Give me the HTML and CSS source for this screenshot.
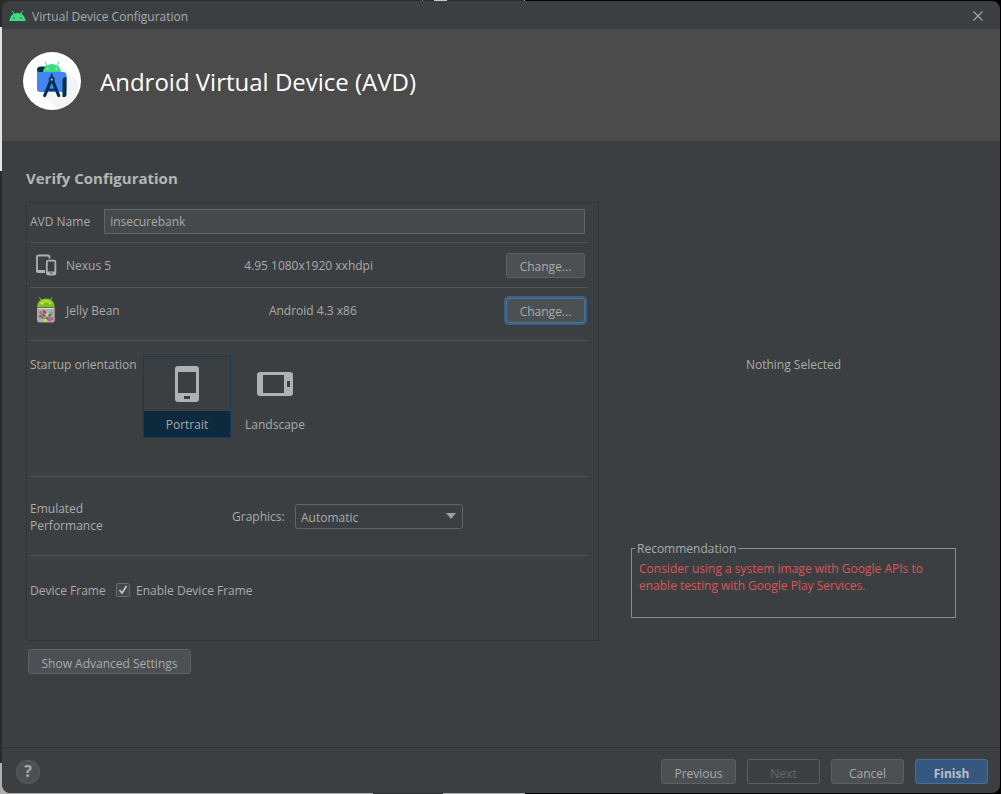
FILE: index.html
```html
<!DOCTYPE html>
<html lang="en">
<head>
<meta charset="utf-8">
<meta name="viewport" content="width=device-width, initial-scale=1">
<title>Virtual Device Configuration</title>
<link rel="stylesheet" href="styles.css">
</head>
<body>
<div class="window">
  <div class="titlebar">
    <svg class="titlebar-icon" viewBox="0 0 17 12" aria-hidden="true">
      <path d="M3.400 1.200l1.600 2.600M13.600 1.200L12 3.800" stroke="#3ddc84" stroke-width="1" stroke-linecap="round"/>
      <path d="M.5 11C.8 6.200 4 3 8.500 3s7.700 3.200 8 8z" fill="#3ddc84"/>
      <circle cx="5" cy="8" r=".8" fill="#3c3f41"/><circle cx="12" cy="8" r=".8" fill="#3c3f41"/>
    </svg>
    <span class="titlebar-text">Virtual Device Configuration</span>
    <button class="close" type="button" aria-label="Close">
      <svg viewBox="0 0 10 10" width="10" height="10"><path d="M.5.5l9 9M9.500.5l-9 9" stroke="#a4a6a7" stroke-width="1.100"/></svg>
    </button>
  </div>

  <header class="header">
    <svg class="logo" viewBox="0 0 58 58" aria-hidden="true">
      <circle cx="29" cy="29" r="29" fill="#fff"/>
      <path d="M36 12l20 19c0 12-8 21-20 26L18 42z" fill="#f3f4f4"/>
      <path d="M24 13.500l-2-3.500M34 13.500l2-3.500" stroke="#3ddc84" stroke-width="1" stroke-linecap="round"/>
      <path d="M14 18q0-3.500 3.500-3.500H24V22H14z" fill="#073042"/>
      <path d="M20 21c0-5.500 4-9 9-9s9 3.500 9 9z" fill="#3ddc84"/>
      <circle cx="24.800" cy="17" r=".7" fill="#fff"/><circle cx="33.200" cy="17" r=".7" fill="#fff"/>
      <path d="M14 17.500q0 2.500 3 2.500h23q3.500 0 3.500 3.500V37q0 3-3 3H17q-3 0-3-3z" fill="#4285f4"/>
      <path d="M39.500 28q0-3 4-3v17.500q0 2.500-2 2.500h-2z" fill="#073042"/>
      <path d="M28.700 22.500v3" stroke="#073042" stroke-width="1.800" stroke-linecap="round"/>
      <path d="M27.500 29.500l-5.800 14M29.900 29.500l5.800 14" stroke="#073042" stroke-width="3.200" stroke-linecap="round"/>
      <path d="M25.500 37.200q3.200 1.200 6.400 0" fill="none" stroke="#073042" stroke-width="2.200"/>
      <circle cx="28.700" cy="27.500" r="2.100" fill="#7aa9f7" stroke="#073042" stroke-width="1.700"/>
    </svg>
    <h1 class="title">Android Virtual Device (AVD)</h1>
  </header>

  <main class="content">
    <h2 class="subtitle">Verify Configuration</h2>
    <div class="columns">
      <form class="settings">
        <div class="panel">
          <div class="row row-name">
            <label for="avd-name">AVD Name</label>
            <input class="text-field" id="avd-name" type="text" value="insecurebank">
          </div>
          <div class="row row-device">
            <svg class="row-icon" viewBox="0 0 22 22" aria-hidden="true">
              <path d="M14.500 4.500V3q0-1.500-1.500-1.500H3.500Q2 1.500 2 3v14" fill="none" stroke="#afb1b3" stroke-width="1.800"/>
              <path d="M1.100 16h8.900v3H3q-1.900 0-1.900-1.800z" fill="#afb1b3"/>
              <rect x="11.800" y="6.600" width="8.600" height="14" rx="1.500" fill="none" stroke="#afb1b3" stroke-width="1.800"/>
              <path d="M12 17.500h8.500V21H12z" fill="#afb1b3"/><path d="M15 19h2.500" stroke="#3c3f41"/>
            </svg>
            <span>Nexus 5</span>
            <span class="spec">4.95 1080x1920 xxhdpi</span>
            <button class="btn btn-change" type="button">Change...</button>
          </div>
          <div class="row row-image">
            <svg class="row-icon row-icon-tall" viewBox="0 0 22 28" aria-hidden="true">
              <path d="M6 4.500L4.500 1.200M15.500 4.500L17 1.200" stroke="#86b82b" stroke-width="1"/>
              <path d="M2 11.500C2.200 5.500 6 2.500 10.900 2.500s8.700 3 8.900 9z" fill="#80bd1c"/>
              <path d="M4 8.500c1-3.500 4-5 7-5s5 1.500 6.500 4c-5-2-9-1-13.500 1z" fill="#a2dc3a"/>
              <circle cx="7" cy="7.800" r=".8" fill="#fff"/><circle cx="14.700" cy="7.800" r=".8" fill="#fff"/>
              <path d="M2 12.500h17.800V24q0 2.500-2.500 2.500h-13Q2 26.500 2 24z" fill="#aba9aa"/>
              <path d="M2.500 12.500h17" stroke="#d8d8d8"/>
              <g stroke-width="2.600" stroke-linecap="round">
                <path d="M5.500 16.500l.5.500M14 24l1 .3" stroke="#c657a5"/><path d="M9 15.500l1 1M12 22.500h.5" stroke="#d23b35"/>
                <path d="M13 15.500l1-.5M6 24l1-.5M17 20h.2" stroke="#5ed0df"/><path d="M16.500 17v.5M9.500 21.500h.2" stroke="#eb7742"/>
                <path d="M5 20.500l1-.5" stroke="#e64541"/><path d="M8.500 19l.5.500M14.500 19h.5" stroke="#2871d9"/>
                <path d="M12 18.500l.5-.3M10 24.500h.8" stroke="#ebd43c"/><path d="M14 21.500h.6M7 21.800h.2" stroke="#45a958"/>
                <path d="M17 22.500v.5" stroke="#e44763"/>
              </g>
            </svg>
            <span>Jelly Bean</span>
            <span class="spec">Android 4.3 x86</span>
            <button class="btn btn-change btn-focused" type="button">Change...</button>
          </div>
          <div class="row row-orientation" role="radiogroup" aria-labelledby="orientation-label">
            <span class="row-label" id="orientation-label">Startup orientation</span>
            <label class="orientation">
              <input class="orientation-input" type="radio" name="orientation" checked>
              <span class="orientation-picture">
                <svg viewBox="0 0 26 38" width="26" height="38" aria-hidden="true"><path fill="#afb1b3" fill-rule="evenodd" d="M4 1h18q3 0 3 3v30q0 3-3 3H4q-3 0-3-3V4q0-3 3-3zM4 7v21h18V7zM10 31v3h6v-3z"/></svg>
              </span>
              <span class="orientation-name">Portrait</span>
            </label>
            <label class="orientation">
              <input class="orientation-input" type="radio" name="orientation">
              <span class="orientation-picture">
                <svg viewBox="0 0 38 26" width="38" height="26" aria-hidden="true"><path fill="#afb1b3" fill-rule="evenodd" d="M4 1h30q3 0 3 3v18q0 3-3 3H4q-3 0-3-3V4q0-3 3-3zM7 4v18h21V4zM31 10v6h3v-6z"/></svg>
              </span>
              <span class="orientation-name">Landscape</span>
            </label>
          </div>
          <div class="row row-performance">
            <span class="row-label performance-label">Emulated Performance</span>
            <label class="graphics-label" for="graphics">Graphics:</label>
            <span class="select-wrap">
              <select class="select" id="graphics"><option>Automatic</option><option>Hardware</option><option>Software</option></select>
              <svg class="select-arrow" viewBox="0 0 10 6" width="10" height="6" aria-hidden="true"><path d="M0 0h10L5 6z" fill="#9da0a2"/></svg>
            </span>
          </div>
          <div class="row row-frame">
            <span class="row-label">Device Frame</span>
            <input class="checkbox" id="frame" type="checkbox" checked>
            <label for="frame">Enable Device Frame</label>
          </div>
        </div>
        <button class="btn btn-advanced" type="button">Show Advanced Settings</button>
      </form>

      <aside class="details">
        <p class="nothing">Nothing Selected</p>
        <fieldset class="recommendation">
          <legend>Recommendation</legend>
          <p class="warning">Consider using a system image with Google APIs to enable testing with Google Play Services.</p>
        </fieldset>
      </aside>
    </div>
  </main>

  <footer class="footer">
    <button class="help" type="button" aria-label="Help">?</button>
    <button class="btn btn-previous" type="button">Previous</button>
    <button class="btn" type="button" disabled>Next</button>
    <button class="btn" type="button">Cancel</button>
    <button class="btn btn-primary" type="button">Finish</button>
  </footer>
</div>
</body>
</html>
```
FILE: styles.css
```css
* { box-sizing: border-box; }

body {
  margin: 0;
  padding: 1px 1px 1px 2px;
  color: #a9abac;
  font: 12px/17px "Open Sans", "Noto Sans", sans-serif;
  background:
    linear-gradient(#c8c8c8, #c8c8c8) 434px 0 / 13px 1px no-repeat,
    linear-gradient(#888, #888) 422px 0 / 1px 1px no-repeat,
    linear-gradient(#aaa, #aaa) 524px 0 / 1px 1px no-repeat,
    linear-gradient(#e4e4e4, #e4e4e4) 0 27px / 2px 144px no-repeat,
    linear-gradient(#b0b0b0, #b0b0b0) 0 100% / 8px 31px no-repeat,
    linear-gradient(#b0b0b0, #b0b0b0) 0 100% / 373px 1px no-repeat,
    linear-gradient(#b0b0b0, #b0b0b0) 443px 100% / 82px 1px no-repeat,
    linear-gradient(90deg, #2b2b2b 525px, #000 525px);
}

button, input, select { font: inherit; color: inherit; }
h1, h2, p { margin: 0; }

.window {
  display: flex;
  flex-direction: column;
  min-height: calc(100vh - 2px);
  overflow: hidden;
  border-radius: 8px;
  background: #3c3f41;
}

.titlebar {
  display: flex;
  align-items: center;
  gap: 6px;
  height: 28px;
  padding: 2px 17px 0 7px;
}
.titlebar-icon { width: 17px; height: 12px; }
.titlebar-text { flex: 1; }
.close { display: flex; padding: 0; border: 0; background: none; }

.header {
  display: flex;
  align-items: center;
  gap: 19px;
  height: 112px;
  padding: 0 21px 8px;
  background: #4b4b4b;
}
.logo { width: 58px; height: 58px; }
.title { padding-top: 2px; color: #fff; font-size: 24px; line-height: 32px; font-weight: 400; }

.content { flex: 1; padding: 24px 44px 24px 24px; }
.subtitle { padding-top: 1px; font-size: 15px; line-height: 24px; font-weight: 700; color: #b4b6b7; }

.columns { display: grid; grid-template-columns: 1fr 325px; gap: 32px; margin-top: 12px; }

.panel { padding: 0 10px 0 3px; border: 1px solid #333637; }
.row { display: flex; align-items: center; border-bottom: 1px solid #525453; }
.row-name { gap: 14px; height: 40px; padding: 0 3px 2px 0; }
.row-device { height: 45px; }
.row-image { height: 53px; padding-bottom: 8px; }
.row-orientation { align-items: flex-start; height: 136px; padding-top: 15px; }
.row-performance { height: 79px; }
.row-frame { height: 84px; padding-bottom: 16px; border: 0; }

.text-field {
  flex: 1;
  min-width: 0;
  height: 25px;
  padding: 0 5px;
  border: 1px solid #646464;
  background: #45494a;
}
.row-icon { width: 22px; height: 22px; margin: 0 9px 0 5px; }
.row-icon-tall { height: 28px; }
.spec { flex: 1; text-align: center; }

.btn {
  width: 73px;
  height: 25px;
  padding: 3px 0 0;
  border: 1px solid #5e6162;
  border-radius: 3px;
  background: #4c5052;
}
.btn-change { width: 79px; margin-right: 3px; }
.btn-focused { border-color: #4b7299; box-shadow: 0 0 0 2px #3d6185; }
.btn-previous { width: 75px; }
.btn-advanced { width: 163px; margin: 8px 2px 0; }
.btn:disabled { color: #666a6c; background: #3c3f41; }
.btn-primary { border-color: #4c708c; background: #365880; font-weight: 700; color: #b9c0c8; }

.row-label { flex-shrink: 0; }
.row-orientation .row-label { width: 113px; }
.orientation { position: relative; width: 88px; border: 1px solid transparent; text-align: center; }
.orientation-input { position: absolute; opacity: 0; }
.orientation-picture { display: flex; align-items: center; justify-content: center; height: 54px; }
.orientation-name { display: block; padding: 5px 0 4px; }
.orientation:has(:checked) { border-color: #163b56; }
.orientation:has(:checked) .orientation-name { background: #0d293e; }

.performance-label { width: 84px; margin-right: 118px; padding-top: 2px; }
.graphics-label { width: 63px; }
.select-wrap { position: relative; }
.select {
  width: 168px;
  height: 25px;
  padding: 2px 5px 0;
  appearance: none;
  border: 1px solid #646464;
  border-radius: 3px;
  background: #3c3f41;
}
.select-arrow { position: absolute; right: 7px; top: 9px; pointer-events: none; }

.row-frame { gap: 6px; }
.row-frame .row-label { width: 80px; }
.checkbox {
  width: 14px;
  height: 14px;
  margin: 0;
  appearance: none;
  border: 1px solid #6b6b6b;
  border-radius: 2px;
  background: #43494a;
}
.checkbox:checked {
  background-image: url("data:image/svg+xml,%3Csvg xmlns='http://www.w3.org/2000/svg' viewBox='0 0 12 12'%3E%3Cpath d='M2.500 6l2.500 3 4.500-7' fill='none' stroke='%23c0c2c3' stroke-width='1.800'/%3E%3C/svg%3E");
}

.details { padding-top: 154px; }
.nothing { text-align: center; }
.recommendation {
  height: 78px;
  margin: 167px 0 0;
  padding: 3px 7px 0;
  border: 1px solid #8a8c8d;
}
.recommendation legend { margin-left: -4px; padding: 0 2px; }
.warning { color: #dc5555; }

.footer {
  display: flex;
  align-items: center;
  gap: 11px;
  height: 46px;
  padding: 2px 12px 0 14px;
  border-top: 1px solid #323232;
}
.help {
  width: 24px;
  height: 24px;
  margin-right: auto;
  padding: 0;
  border: 1px solid #5e6162;
  border-radius: 50%;
  background: #4c5052;
  font-size: 16px;
  font-weight: 700;
}
```
